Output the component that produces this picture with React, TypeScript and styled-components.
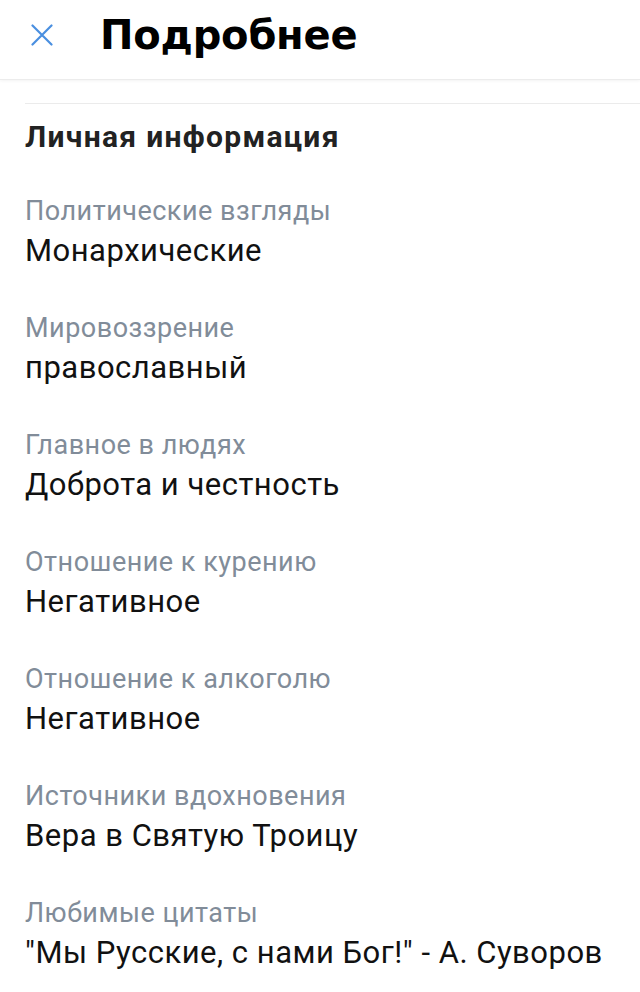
import React from 'react';
import styled, { createGlobalStyle } from 'styled-components';

const GlobalStyle = createGlobalStyle`
  body {
    margin: 0;
    background: #ffffff;
    font-family: Roboto, "Noto Sans", sans-serif;
  }
`;

const Page = styled.div`
  width: 640px;
  min-height: 992px;
  background: #ffffff;
`;

const Header = styled.header`
  display: flex;
  align-items: center;
  height: 80px;
  padding: 0 0 10px 31px;
  box-sizing: border-box;
  border-bottom: 1px solid #ececec;
  box-shadow: 0 1px 3px rgba(0, 0, 0, 0.05);
`;

const CloseButton = styled.button`
  display: flex;
  align-items: center;
  justify-content: center;
  width: 22px;
  height: 22px;
  padding: 0;
  border: none;
  background: none;
  color: #4a8fe0;
  margin-right: 47px;
`;

const Title = styled.h1`
  margin: 0;
  font-family: "DejaVu Sans", Inter, sans-serif;
  font-size: 40px;
  line-height: 46px;
  font-weight: 700;
  letter-spacing: -0.2px;
  color: #000000;
`;

const Divider = styled.div`
  margin: 23px 0 0 25px;
  border-top: 1px solid #ebebeb;
`;

const Section = styled.section`
  padding: 15px 25px 0;
`;

const SectionTitle = styled.h2`
  margin: 0 0 40px;
  font-size: 30px;
  line-height: 36px;
  font-weight: 700;
  letter-spacing: 1.3px;
  color: #222222;
`;

const List = styled.dl`
  margin: 0;
  display: flex;
  flex-direction: column;
  gap: 43px;
`;

const Item = styled.div`
  display: flex;
  flex-direction: column;
  gap: 6px;
`;

const Label = styled.dt`
  font-size: 27px;
  line-height: 32px;
  letter-spacing: 0.5px;
  color: #818c99;
`;

const Value = styled.dd`
  margin: 0;
  font-size: 31px;
  line-height: 36px;
  letter-spacing: 0.5px;
  color: #111111;
`;

const info: Array<[string, string]> = [
  ['Политические взгляды', 'Монархические'],
  ['Мировоззрение', 'православный'],
  ['Главное в людях', 'Доброта и честность'],
  ['Отношение к курению', 'Негативное'],
  ['Отношение к алкоголю', 'Негативное'],
  ['Источники вдохновения', 'Вера в Святую Троицу'],
  ['Любимые цитаты', '"Мы Русские, с нами Бог!" - А. Суворов'],
];

function App() {
  return (
    <Page>
      <GlobalStyle />
      <Header>
        <CloseButton aria-label="Закрыть">
          <svg width="22" height="22" viewBox="0 0 22 22" fill="none">
            <path d="M1.5 1.5 L20.5 20.5 M20.5 1.5 L1.5 20.5" stroke="currentColor" strokeWidth="2.2" strokeLinecap="round" />
          </svg>
        </CloseButton>
        <Title>Подробнее</Title>
      </Header>
      <Divider />
      <Section>
        <SectionTitle>Личная информация</SectionTitle>
        <List>
          {info.map(([label, value]) => (
            <Item key={label}>
              <Label>{label}</Label>
              <Value>{value}</Value>
            </Item>
          ))}
        </List>
      </Section>
    </Page>
  );
}

export default App;
